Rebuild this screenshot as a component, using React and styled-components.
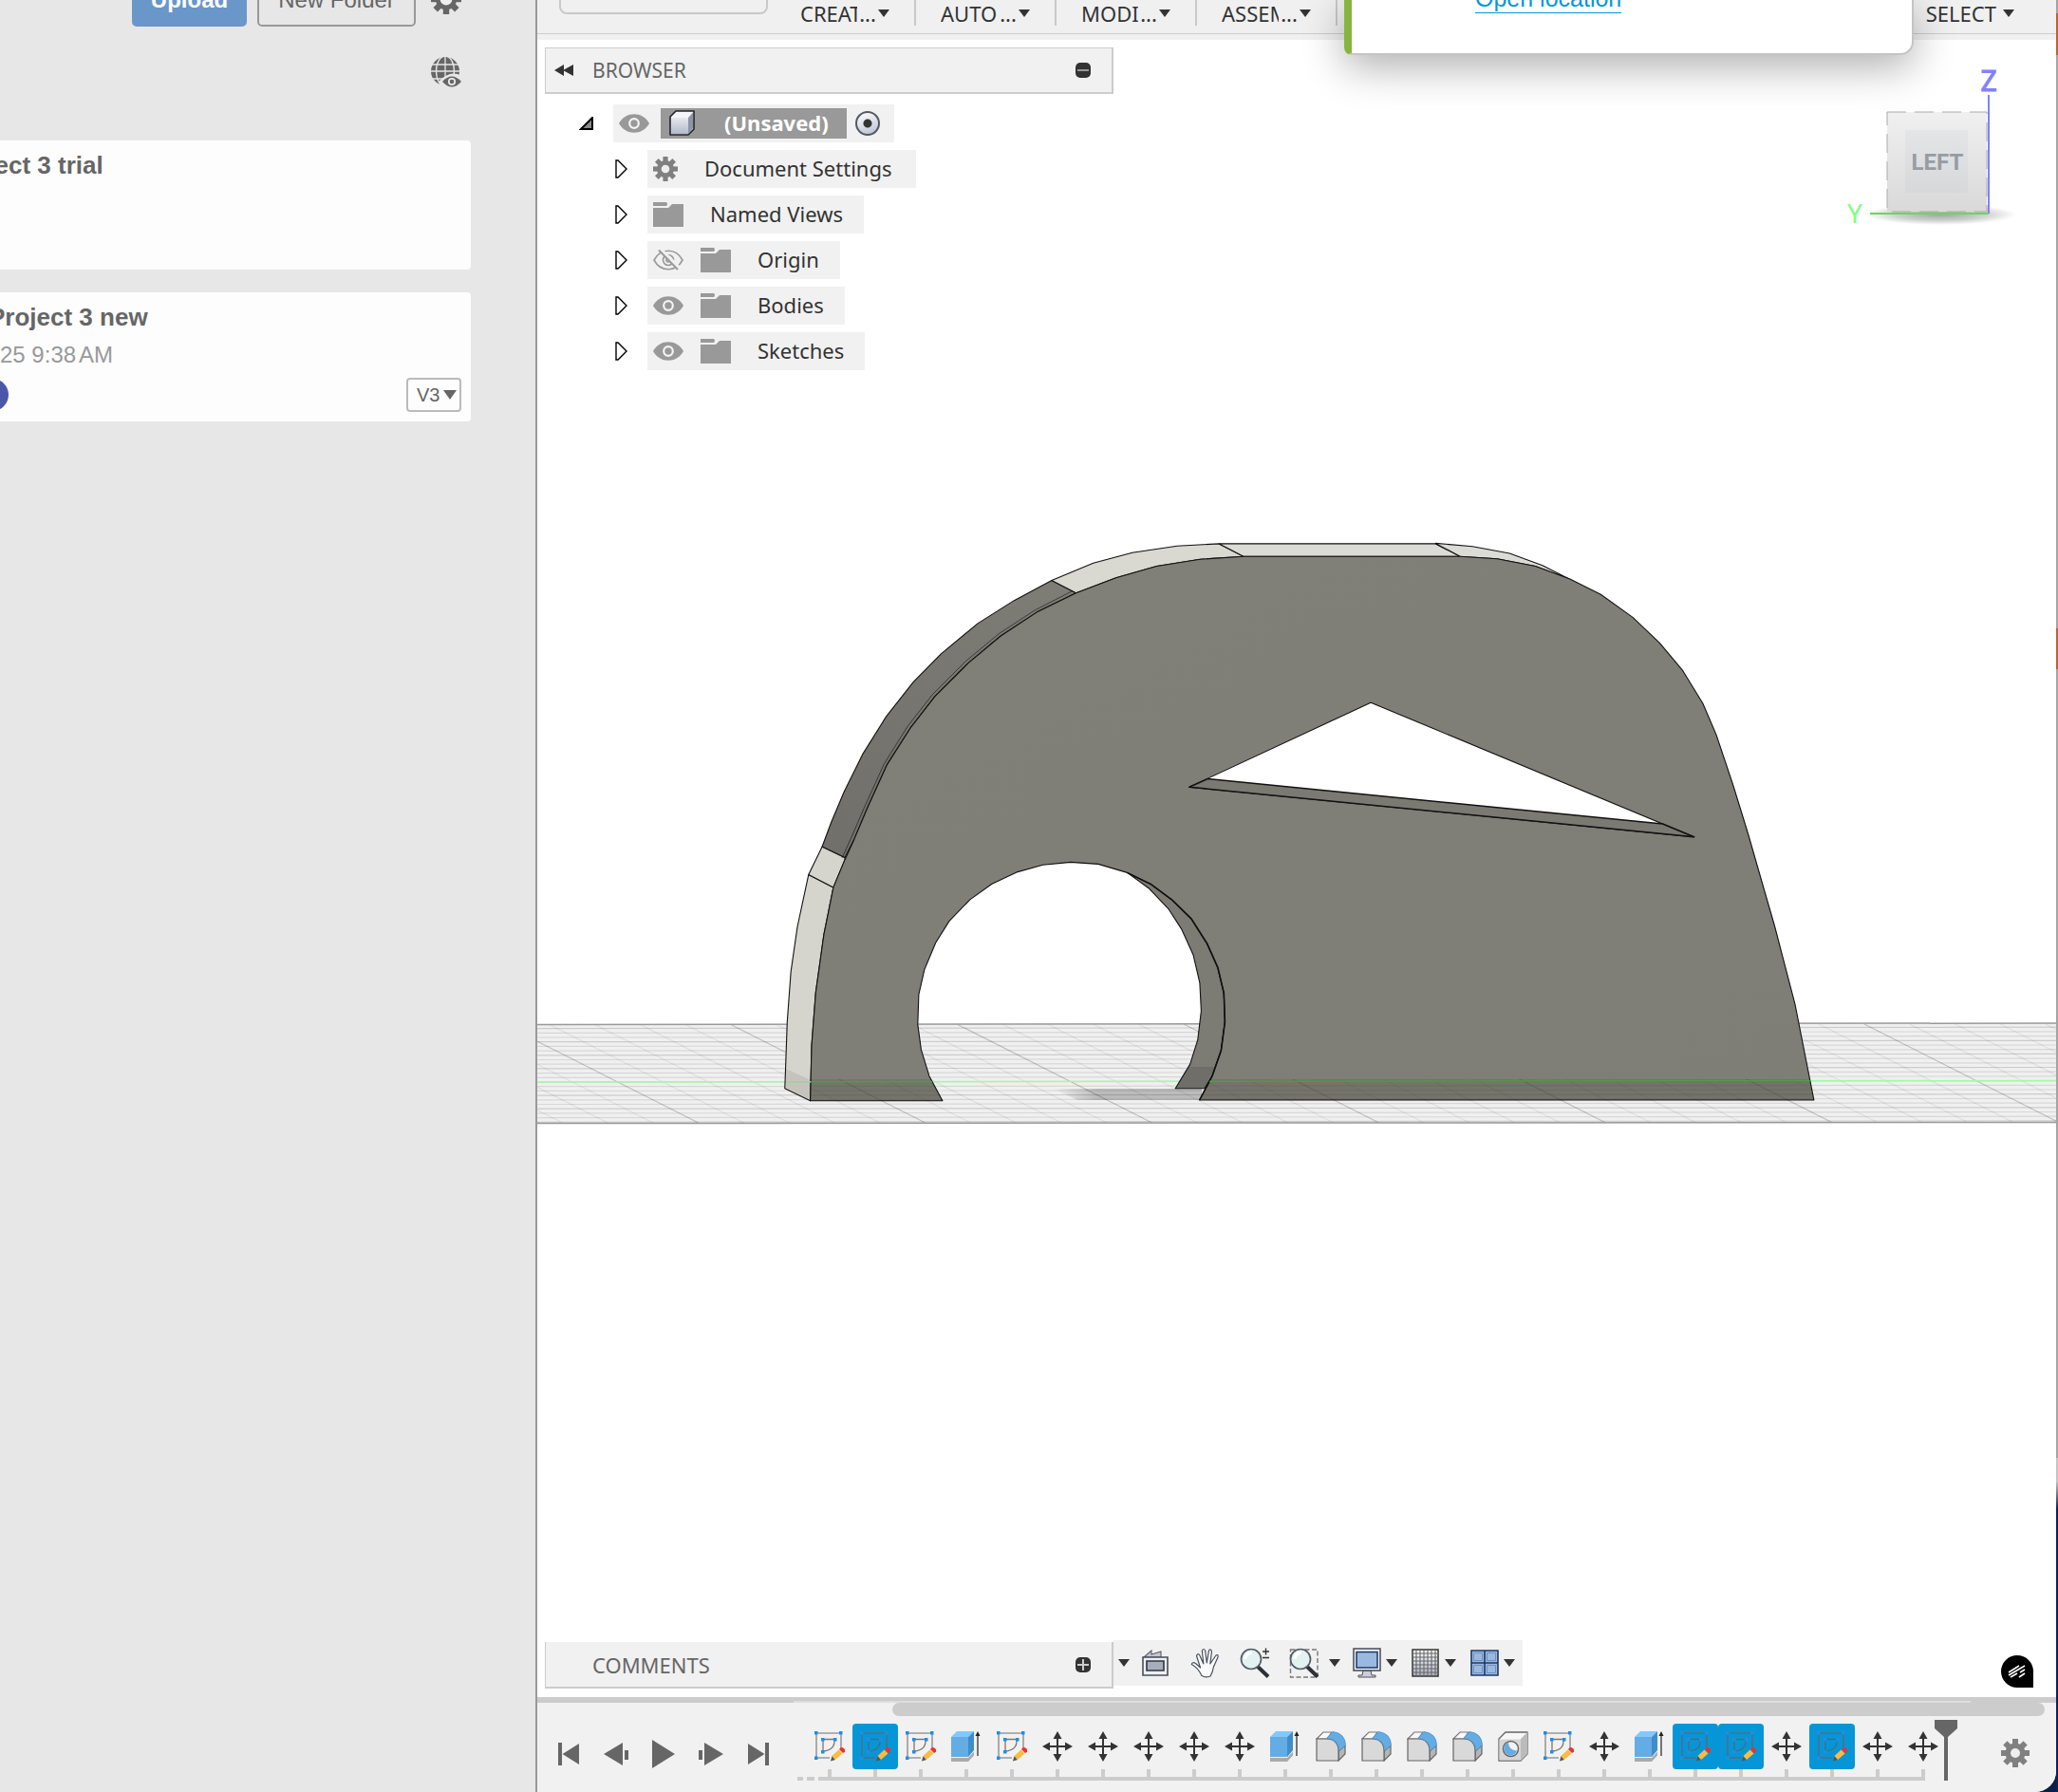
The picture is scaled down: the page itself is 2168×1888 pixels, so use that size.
import React from "react";
import styled, { createGlobalStyle, css } from "styled-components";

const GlobalStyle = createGlobalStyle`
  *, *::before, *::after { box-sizing: border-box; }
  body { margin: 0; background: #0b1f45; }
  button, select, input { font: inherit; color: inherit; margin: 0; }
  button { padding: 0; border: 0; background: none; cursor: pointer; }
  svg { display: block; flex: none; }
`;

const UI_FONT = '"Noto Sans", "Open Sans", sans-serif';
const WEB_FONT = '"Liberation Sans", Arial, sans-serif';

/* ---------- window ---------- */

const Desktop = styled.div`
  display: flex;
  min-height: 100vh;
  overflow: hidden;
`;

const DesktopEdge = styled.div`
  flex: 0 0 2px;
  background: linear-gradient(
    #a3a3a3 0 14px, #b5652f 14px 58px, #a3a3a3 58px 662px, #b5652f 662px 705px,
    #a3a3a3 705px 1536px, #c4c4c4 1536px 1560px, #0e2152 1590px 100%
  );
`;

/* ---------- data panel ---------- */

const DataPanel = styled.aside`
  flex: 0 0 566px;
  padding-right: 68px;
  border-right: 2px solid #999;
  background: #e7e7e7;
  overflow: hidden;
  font-family: ${WEB_FONT};
  font-size: 24px;
  color: #666;
`;

const PanelActions = styled.div`
  display: flex;
  align-items: center;
  justify-content: flex-end;
  height: 58px;
  margin-top: -30px;
  padding-right: 10px;
`;

const PanelButton = styled.button`
  width: ${(p) => (p.$primary ? "121px" : "167px")};
  height: 58px;
  margin-right: ${(p) => (p.$primary ? "11px" : "16px")};
  padding-top: 2px;
  border-radius: 5px;
  line-height: 52px;
  ${(p) =>
    p.$primary
      ? css`background: #6997c9; color: #fff; font-weight: bold;`
      : css`border: 2px solid #999; color: #666;`}
`;

const PanelFilter = styled.div`
  display: flex;
  justify-content: flex-end;
  padding: 32px 10px 0 0;
`;

const FileList = styled.div`
  display: flex;
  flex-direction: column;
  gap: 24px;
  margin-top: 56px;
`;

const FileCard = styled.article`
  display: flex;
  flex-direction: column;
  height: 136px;
  padding-top: 8px;
  border-radius: 0 4px 4px 0;
  background: #fdfdfd;
`;

const FileTitle = styled.h2`
  margin: 0 0 0 ${(p) => -p.$cut}px;
  font-size: 26px;
  line-height: 36px;
  font-weight: bold;
  white-space: nowrap;
`;

const FileDate = styled.time`
  display: flex;
  gap: 3px;
  line-height: 44px;
  color: #999;
`;

const FileFooter = styled.div`
  display: flex;
  align-items: center;
  justify-content: space-between;
  padding: 2px 10px 0 0;
  margin-left: -25px;
`;

const Avatar = styled.span`
  width: 34px;
  height: 34px;
  border-radius: 50%;
  background: #4a57a9;
`;

const VersionBox = styled.label`
  display: flex;
  align-items: center;
  width: 58px;
  height: 36px;
  padding: 0 3px 0 9px;
  border: 2px solid #bbb;
  border-radius: 4px;
  select {
    flex: 1;
    min-width: 0;
    padding: 0;
    border: 0;
    background: none;
    appearance: none;
    font-size: 20px;
    line-height: 24px;
  }
`;

/* ---------- modeling window ---------- */

const Workspace = styled.main`
  position: relative;
  flex: 1;
  min-width: 0;
  display: flex;
  flex-direction: column;
  overflow: hidden;
  border-radius: 0 0 22px 0;
  background: #fff;
  font-family: ${UI_FONT};
  font-size: 22px;
  line-height: 30px;
  color: #333;
`;

const Toolbar = styled.div`
  display: flex;
  align-items: flex-start;
  height: 42px;
  padding: 0 44px 0 23px;
  background: linear-gradient(#f0f0f0 0 35px, #ccc 35px 36px, #f0f0f0 36px);
`;

const WorkspaceButton = styled.button`
  width: 220px;
  height: 45px;
  margin: -30px 8px 0 0;
  border: 2px solid #c9c9c9;
  border-radius: 8px;
`;

const MenuButton = styled.button`
  display: flex;
  align-items: center;
  width: 148px;
  height: 27px;
  padding-left: 26px;
  border-right: 2px solid #c9c9c9;
  line-height: 30px;
`;

const MenuLabel = styled.span`
  width: 60px;
  overflow: hidden;
  white-space: nowrap;
  text-align: left;
`;

const MenuDots = styled.span`
  width: 22px;
`;

const SelectButton = styled.button`
  display: flex;
  align-items: center;
  gap: 7px;
  height: 27px;
  margin-left: auto;
  line-height: 30px;
`;

const Toast = styled.section`
  position: absolute;
  z-index: 3;
  top: 0;
  right: 150px;
  width: 600px;
  height: 58px;
  padding-left: 130px;
  border-style: solid;
  border-width: 0 2px 2px 8px;
  border-color: #c4c4c4 #c4c4c4 #c4c4c4 #86b53f;
  border-radius: 0 0 14px 8px;
  background: #fff;
  box-shadow: 0 12px 44px rgba(0, 0, 0, 0.32);
`;

const ToastLink = styled.a`
  display: block;
  width: max-content;
  margin-top: -16px;
  border-bottom: 1px solid #0696d7;
  font-family: ${WEB_FONT};
  font-size: 25px;
  line-height: 29px;
  color: #0696d7;
  text-decoration: none;
`;

const Viewport = styled.section`
  position: relative;
  flex: 1;
  display: flex;
  flex-direction: column;
  justify-content: space-between;
  min-height: 900px;
  padding: 8px 0 9px 8px;
`;

const SceneSvg = styled.svg`
  position: absolute;
  inset: 0;
  width: 100%;
  height: 100%;
`;

const ViewportRow = styled.div`
  position: relative;
  display: flex;
  align-items: flex-start;
  justify-content: space-between;
  padding-right: ${(p) => p.$right}px;
`;

const CubeSlot = styled.div`
  padding-top: 20px;
`;

const Palette = styled.header`
  display: flex;
  align-items: center;
  width: 599px;
  height: 49px;
  padding: 0 22px 0 9px;
  border-style: solid;
  border-color: #ccc;
  border-width: ${(p) => (p.$open ? "1px 2px 2px 1px" : "0 2px 2px 1px")};
  background: #f1f1f1;
  color: #666;
`;

const PaletteArrow = styled.button`
  width: 40px;
`;

const PaletteTitle = styled.h3`
  flex: 1;
  margin: 0;
  font-size: ${(p) => p.$size};
  font-weight: normal;
  line-height: 30px;
`;

const PaletteToggle = styled.button`
  width: 16px;
  height: 16px;
  border-radius: 5px;
  background: #333;
`;

const Tree = styled.ul`
  display: flex;
  flex-direction: column;
  gap: 8px;
  margin: 11px 0 0;
  padding: 0;
  list-style: none;
`;

const TreeRow = styled.li`
  display: flex;
  height: 40px;
  padding-left: ${(p) => p.$depth * 36}px;
`;

const Expander = styled.button`
  width: 36px;
`;

const TreeItem = styled.div`
  display: flex;
  align-items: center;
  gap: 18px;
  padding: 0 ${(p) => p.$end || 22}px 0 6px;
  background: #f1f1f1;
`;

const TreeLabel = styled.span`
  margin-left: 10px;
  padding-bottom: 2px;
  white-space: nowrap;
`;

const RootItem = styled(TreeItem)`
  gap: 12px;
  padding-right: 15px;
`;

const RootName = styled.div`
  display: flex;
  align-items: center;
  gap: 31px;
  height: 32px;
  padding: 0 19px 0 9px;
  background: #999;
  color: #fff;
  font-weight: bold;
  span { padding-bottom: 2px; }
`;

const ActivateRadio = styled.input`
  appearance: none;
  width: 26px;
  height: 26px;
  border: 2px solid #55585f;
  border-radius: 50%;
  background:
    radial-gradient(circle, #333 0 4px, transparent 5px),
    linear-gradient(160deg, #fff, #b9c0d2);
  && { margin: 0 0 0 -3px; }
`;

const NavGroup = styled.div`
  display: flex;
  flex: 1;
  align-items: flex-start;
`;

const CommentsSlot = styled.div`
  padding-top: 2px;
`;

const NavBar = styled.div`
  display: flex;
  align-items: center;
  height: 48px;
  padding: 0 8px 0 5px;
  background: #f1f1f1;
`;

const NavButton = styled.button`
  display: flex;
  align-items: center;
  gap: ${(p) => p.$gap || 0}px;
  margin-right: ${(p) => p.$after}px;
`;

const Badge = styled.button`
  display: grid;
  place-items: center;
  width: 34px;
  height: 34px;
  margin-top: 16px;
  border-radius: 50% 50% 0 50%;
  background: #000;
`;

/* ---------- timeline ---------- */

const Timeline = styled.footer`
  background: #f1f1f1;
`;

const Splitter = styled.div`
  display: flex;
  align-items: flex-end;
  height: 6px;
  padding: 0 90px 0 270px;
  background: #ccc;
  &::after {
    content: "";
    flex: 1;
    height: 2px;
    background: #ddd;
  }
`;

const ScrollTrack = styled.div`
  padding: 0 12px 0 374px;
`;

const ScrollThumb = styled.div`
  height: 14px;
  border-radius: 7px;
  background: #ccc;
`;

const TimelineRow = styled.div`
  display: flex;
  align-items: flex-start;
  height: 80px;
  padding: 0 28px 0 8px;
`;

const Transport = styled.div`
  display: flex;
  height: 80px;
  margin-right: 16px;
`;

const TransportButton = styled.button`
  display: grid;
  place-items: center;
  width: 50px;
  height: 80px;
`;

const History = styled.div`
  padding-top: 8px;
`;

const FeatureList = styled.div`
  display: flex;
  padding-left: 10px;
`;

const Feature = styled.button`
  display: flex;
  flex-direction: column;
  align-items: center;
  width: 48px;
`;

const FeatureTile = styled.span`
  display: grid;
  place-items: center;
  width: 48px;
  height: 48px;
  border-radius: 4px;
  background: ${(p) => (p.$selected ? "#0696d7" : "transparent")};
`;

const Tick = styled.span`
  width: 4px;
  height: 8px;
  background: #ccc;
`;

const Rail = styled.div`
  display: flex;
  gap: 4px;
  height: 4px;
  padding-right: 22px;
`;

const RailPart = styled.span`
  flex: ${(p) => (p.$width ? `0 0 ${p.$width}px` : "1")};
  background: #ccc;
`;

const MarkerButton = styled.button`
  margin: 4px 0 0 -12px;
`;

const TimelineSettings = styled.button`
  margin: 24px 0 0 auto;
`;

/* ---------- icons ---------- */

function Gear({ size, color, hole = 5 }) {
  return (
    <svg width={size} height={size} viewBox="-15 -15 30 30">
      <g fill={color}>
        {[0, 45, 90, 135].map((a) => (
          <rect key={a} x="-3" y="-15" width="6" height="30" transform={`rotate(${a})`} />
        ))}
        <circle r="10.5" />
      </g>
      <circle r={hole} fill="#eee" />
    </svg>
  );
}

const Caret = ({ w = 14, h = 9, color = "#333" }) => (
  <svg width={w} height={h} viewBox="0 0 14 9" preserveAspectRatio="none">
    <path d="M0 0H14L7 9Z" fill={color} />
  </svg>
);

const GlobeEye = () => (
  <svg width="32" height="32" viewBox="0 0 32 32">
    <ellipse cx="15" cy="15" rx="15" ry="15" fill="#666" />
    <g fill="none" stroke="#e7e7e7" strokeWidth="1.3">
      <path d="M0 8H30M0 15H30M0 23H30M15 0V30" />
      <ellipse cx="15" cy="15" rx="9.5" ry="16" />
    </g>
    <path d="M8 26Q21 12 34 21V34H12Z" fill="#e7e7e7" />
    <path d="M12 26Q22 15 32 26Q22 37 12 26Z" fill="#666" />
    <circle cx="22" cy="26" r="3.2" fill="#666" stroke="#e7e7e7" strokeWidth="1.8" />
  </svg>
);

const Eye = () => (
  <svg width="32" height="20" viewBox="0 0 32 20">
    <path d="M0 10C7-3 25-3 32 10C25 23 7 23 0 10Z" fill="#999" />
    <circle cx="16" cy="10" r="4.8" fill="#999" stroke="#f4f4f4" strokeWidth="2.2" />
  </svg>
);

const EyeOff = () => (
  <svg width="32" height="22" viewBox="0 0 32 22" fill="none" stroke="#999" strokeWidth="1.6">
    <path d="M1 11C8-2 24-2 31 11C24 24 8 24 1 11Z" />
    <circle cx="16" cy="11" r="5.5" />
    <circle cx="16" cy="11" r="2" />
    <path d="M8 0L28 20" stroke="#f1f1f1" strokeWidth="4" />
    <path d="M6 0.500L26 21" strokeWidth="2" />
  </svg>
);

const Folder = () => (
  <svg width="32" height="26" viewBox="0 0 32 26" fill="#999">
    <path d="M0 0H14Q16 2 14 4H0Z" />
    <path d="M0 6H16L20 2H32V26H0Z" />
  </svg>
);

const BodyCube = () => (
  <svg width="27" height="28" viewBox="0 0 27 28">
    <defs>
      <linearGradient id="cubeFace" x1="0" y1="0" x2="0" y2="1">
        <stop offset="0" stopColor="#e6e8ee" />
        <stop offset="1" stopColor="#b3b9cc" />
      </linearGradient>
    </defs>
    <path d="M1 7L7 1H26V20L20 26H1Z" fill="#f4f5f8" stroke="#222" strokeWidth="1.6" strokeLinejoin="round" />
    <path d="M2 8H20V25H2Z" fill="url(#cubeFace)" />
    <path d="M20 8L25 2.500V19L20 25Z" fill="#8e94a8" />
  </svg>
);

const RootArrow = () => (
  <svg width="16" height="14" viewBox="0 0 16 14">
    <path d="M2 13L14 1V13Z" fill="#888" stroke="#000" strokeWidth="2" />
  </svg>
);

const ChildArrow = () => (
  <svg width="16" height="20" viewBox="0 0 16 20">
    <path d="M3 1H5L14 10L5 19H3Z" fill="#fff" stroke="#000" strokeWidth="1.4" />
  </svg>
);

const SketchIcon = ({ dim }) => (
  <svg width="32" height="32" viewBox="0 0 32 32">
    <path d="M2 2H28V18M2 2V28H16" fill="none" stroke={dim ? "#4a7288" : "#999"} strokeWidth="1.600" />
    <path d="M9 8.500H21Q22 20 9 21Z" fill="none" stroke={dim ? "#4a6c80" : "#777"} strokeWidth="1.300" />
    <g fill="#1e8ee6">
      <path d="M0 0H3.500V3.500H0ZM26 0H29.500V3.500H26ZM0 26.500H3.500V30H0ZM7 7H10.500V10.500H7ZM20 7H23.500V10.500H20ZM7 20H10.500V23.500H7Z" />
    </g>
    <path d="M17 31.500L18.500 26L22 30Z" fill="#555" />
    <path d="M18.500 26L25.500 19.500L29.500 23.500L22 30Z" fill="#f9bb42" />
    <path d="M26 19Q28 15.500 31 18T30 23Z" fill="#ee3030" />
  </svg>
);

const MoveIcon = () => (
  <svg width="32" height="32" viewBox="0 0 32 32" fill="#333">
    <path d="M15 5H17V27H15ZM5 15H27V17H5Z" />
    <path d="M16 0L20.500 8H11.500ZM16 32L20.500 24H11.500ZM0 16L8 11.500V20.500ZM32 16L24 11.500V20.500Z" />
  </svg>
);

const ExtrudeIcon = () => (
  <svg width="32" height="32" viewBox="0 0 32 32">
    <path d="M0 28H18L24 21.500V25.500L18 32H0Z" fill="#aaa" />
    <path d="M0 6H18V27H0Z" fill="#64ace4" />
    <path d="M0 6L6 0H24L18 6Z" fill="#83c8fb" />
    <path d="M18 6L24 0V20L18 27Z" fill="#3d8ecb" />
    <path d="M27.400 3H28.600V26H27.400Z" fill="#222" />
    <path d="M28 0L30.500 5H25.500Z" fill="#222" />
  </svg>
);

const FilletIcon = () => (
  <svg width="32" height="32" viewBox="0 0 32 32">
    <path d="M1 8L8 1H17L12 8Z" fill="#fafafa" stroke="#777" strokeWidth="1.200" />
    <path d="M24 31V21L31 15V24Z" fill="#b5b5b5" stroke="#666" strokeWidth="1.200" />
    <path d="M1 31V8H11Q24 8 24 21V31Z" fill="#d9d9d9" stroke="#666" strokeWidth="1.200" />
    <path d="M12 7L18 0.500Q31 2 31.500 14.500L25 20.500Q24 8.500 12 7Z" fill="#64ace4" stroke="#4c94cc" strokeWidth="0.800" />
  </svg>
);

const HoleIcon = () => (
  <svg width="32" height="32" viewBox="0 0 32 32">
    <path d="M1 8L8 1H31V24L24 31H1Z" fill="#f7f7f7" stroke="#666" strokeWidth="1.300" />
    <path d="M24 8L31 1V24L24 31Z" fill="#bbb" />
    <path d="M1.500 8.500H24V30.500H1.500Z" fill="#d6d6d6" />
    <circle cx="13.500" cy="18.500" r="8" fill="#f2f2f2" stroke="#666" strokeWidth="1.500" />
    <path d="M11 11.800A7 7 0 1 0 20 20.500Q11 20 11 11.800Z" fill="#64ace4" />
  </svg>
);

const FEATURE_ICONS = {
  sketch: SketchIcon,
  move: MoveIcon,
  extrude: ExtrudeIcon,
  fillet: FilletIcon,
  hole: HoleIcon,
};

const LookAtIcon = () => (
  <svg width="28" height="30" viewBox="0 0 28 30">
    <path d="M2 9L10 2V6L20 3V9Z" fill="#c3c7d0" stroke="#5b606b" strokeWidth="1.100" />
    <path d="M1 9H27V28H1Z" fill="#eef0f5" stroke="#4a4e58" strokeWidth="1.600" />
    <path d="M5 13H23V23H5Z" fill="#a7adbd" stroke="#33363f" strokeWidth="1.600" />
  </svg>
);

const HandIcon = () => (
  <svg width="32" height="32" viewBox="0 0 32 32">
    <path
      d="M12 29.500Q8 21 1.300 17.500Q2 14.500 5.500 16.500L10.500 21L6.500 8.500Q8 5 9.800 8L13.800 17L12.300 3Q14 0 15.600 3L17.300 16L19.500 3Q21.500 0.500 22.500 4L20.800 17L27 8Q29.500 6.500 29 10L24.500 20Q23.500 26 21 30Q16 32 12 29.500Z"
      fill="#fbfbfd"
      stroke="#4a505c"
      strokeWidth="1.200"
      strokeLinejoin="round"
    />
  </svg>
);

const ZoomIcon = ({ windowed }) => (
  <svg width="32" height="32" viewBox="0 0 32 32">
    {windowed ? (
      <path d="M1.500 2H30V31H1.500Z" fill="none" stroke="#777" strokeWidth="1.400" strokeDasharray="5 2.500" />
    ) : (
      <path d="M24 4H31M27.500 0.500V7.500M24 10.500H31" stroke="#333" strokeWidth="1.400" />
    )}
    <path d="M19 20L30 30.500" stroke="#2d3038" strokeWidth="4" />
    <circle cx="12" cy="12" r="10.500" fill="#e3f1f1" stroke="#555b66" strokeWidth="1.700" />
    <path d="M6 12Q6 6 13 5" fill="none" stroke="#fff" strokeWidth="3" />
  </svg>
);

const MonitorIcon = () => (
  <svg width="30" height="32" viewBox="0 0 30 32">
    <path d="M11 24H19L20 29H24V31H6V29H10Z" fill="#ccd" stroke="#555" />
    <path d="M1 1H29V24H1Z" fill="#f4f5f8" stroke="#444a58" strokeWidth="1.500" />
    <path d="M4 4.500H26V21H4Z" fill="#9bb9e0" stroke="#1d3766" strokeWidth="1.500" />
  </svg>
);

const GridIcon = () => (
  <svg width="29" height="30" viewBox="0 0 29 30">
    <defs>
      <linearGradient id="gridFade" x1="0" y1="0" x2="0" y2="1">
        <stop offset="0" stopColor="#fff" />
        <stop offset="1" stopColor="#a9afc0" />
      </linearGradient>
    </defs>
    <path d="M1 1H28V29H1Z" fill="url(#gridFade)" stroke="#333" strokeWidth="1.500" />
    <path
      d="M5 1V29M9 1V29M13 1V29M17 1V29M21 1V29M25 1V29M1 5H28M1 9H28M1 13H28M1 17H28M1 21H28M1 25H28"
      stroke="#666"
      strokeWidth="1.100"
    />
  </svg>
);

const PanesIcon = () => (
  <svg width="30" height="28" viewBox="0 0 30 28">
    <path d="M1 1H29V27H1Z" fill="#9bb9e0" stroke="#1d3766" strokeWidth="1.600" />
    <path d="M15 1V27M1 14H29" stroke="#1d3766" strokeWidth="1.600" />
    <path d="M3.500 3.500H12.500V11.500H3.500ZM17.500 3.500H26.500V11.500H17.500ZM3.500 16.500H12.500V24.500H3.500ZM17.500 16.500H26.500V24.500H17.500Z" fill="none" stroke="#6d8fc0" />
  </svg>
);

const ViewCube = () => (
  <svg width="190" height="170" viewBox="1940 70 190 170" role="img" aria-label="View cube">
    <defs>
      <linearGradient id="cubeSide" x1="0" y1="0" x2="0" y2="1">
        <stop offset="0" stopColor="#f0f0f0" />
        <stop offset="1" stopColor="#d9d9d9" />
      </linearGradient>
      <linearGradient id="cubeCenter" x1="0" y1="0" x2="0" y2="1">
        <stop offset="0" stopColor="#e4e5e7" />
        <stop offset="1" stopColor="#d6d8da" />
      </linearGradient>
      <radialGradient id="cubeShadow">
        <stop offset="0" stopColor="#000" stopOpacity="0.36" />
        <stop offset="0.6" stopColor="#000" stopOpacity="0.18" />
        <stop offset="1" stopColor="#000" stopOpacity="0" />
      </radialGradient>
    </defs>
    <ellipse cx="2044" cy="226" rx="80" ry="11" fill="url(#cubeShadow)" />
    <rect x="1988" y="118" width="105" height="105" fill="url(#cubeSide)" stroke="#aaa" strokeDasharray="20 9" />
    <rect x="2007" y="137" width="66" height="66" fill="url(#cubeCenter)" />
    <path d="M1970 225H2095" stroke="#5fdc5f" strokeWidth="2" />
    <path d="M2095 100V225" stroke="#8080ff" strokeWidth="2" />
    <g textAnchor="middle">
      <text x="2041" y="179" fontFamily="Roboto, sans-serif" fontWeight="bold" fontSize="24" fill="#989ca2">LEFT</text>
      <text x="2095" y="96" fontFamily={UI_FONT} fontSize="30" fill="#8080ff" stroke="#8080ff">Z</text>
      <text x="1954" y="235" fontFamily={UI_FONT} fontSize="28" fill="#7fff7f">Y</text>
    </g>
  </svg>
);

/* ---------- 3D scene ---------- */

const ARC_POINTS =
  "1263.6,1159 1277,1133.7 1286.4,1106.7 1290.4,1076.5 1289.3,1046.3 1282.9,1019.4 1271.4,993.7 1255,968 1235,948.4 1212.5,931.6 1187.5,919.4";

const FRONT =
  "M853.6 1159.8L855 1101.8 859.3 1045.9 867.9 984.7 877.9 934.9 890 905.9 900 883.9 914.3 850 934.3 805.9 959.3 766.7 985 733.7 1020 698.6 1054.3 670 1092.1 645.1 1133.6 624.7 1175.7 608.8 1218.6 596.5 1264.3 589.2 1310 586.3 1538.2 586.3 1577.2 588.8 1617.4 596.5 1653.8 610 1686.3 626.3 1720 650.4 1748.3 677.3 1772.8 706.7 1793.8 741 1808 774.1 1826 828 1842 880 1856.6 931 1869.6 976 1891 1058.2 1910.900 1159 " +
  "L1263.6 1159 1277 1133.7 1286.4 1106.7 1290.4 1076.5 1289.3 1046.3 1282.9 1019.4 1271.4 993.7 1255 968 1235 948.4 1212.5 931.6 1187.5 919.4 1157 910.4 1127.9 908.4 1098.6 911.2 1072.1 918.6 1045 931.2 1022.1 947.6 1000 970.4 985.7 993.3 973.9 1021.4 967.9 1047.6 966.8 1079.4 970.4 1105.9 978.9 1133.7 992.9 1159.800Z" +
  "M1444.1 740.2L1784.7 881.8 1252.9 829.2Z";

const FLOOR_ROWS = Array.from({ length: 22 }, (_, i) => 1083 + i * 4.7);
const FLOOR_DIAGONALS = Array.from({ length: 42 }, (_, i) => i - 8);

function FloorLines() {
  return (
    <g fill="none">
      {FLOOR_ROWS.map((y, i) => (
        <path key={y} d={`M566 ${y + 0.6}L2166 ${y - 0.8}`} stroke="#000" strokeOpacity={i % 3 ? 0.1 : 0.15} strokeWidth="1.2" />
      ))}
      {FLOOR_DIAGONALS.map((n) => (
        <path
          key={n}
          d={`M${769 + n * 47.8} 1079L${974.8 + n * 47.8} 1183`}
          stroke="#000"
          strokeOpacity={n % 5 === 0 ? 0.2 : 0.07}
          strokeWidth="1.2"
        />
      ))}
    </g>
  );
}

function Scene() {
  return (
    <SceneSvg viewBox="566 42 1600 1746" preserveAspectRatio="xMidYMid slice" role="img" aria-label="Model">
      <defs>
        <linearGradient id="front" x1="0" y1="0" x2="1" y2="1">
          <stop offset="0" stopColor="#818078" />
          <stop offset="1" stopColor="#7e7d76" />
        </linearGradient>
        <linearGradient id="rim" x1="1" y1="0" x2="0" y2="1">
          <stop offset="0" stopColor="#7e7d76" />
          <stop offset="1" stopColor="#706f6a" />
        </linearGradient>
        <linearGradient id="shadow">
          <stop offset="0" stopColor="#000" stopOpacity="0" />
          <stop offset="0.3" stopColor="#000" stopOpacity="0.22" />
        </linearGradient>
        <clipPath id="floorClip"><path d="M566 1079L2166 1078V1183L566 1184Z" /></clipPath>
        <clipPath id="frontClip"><path d={FRONT} clipRule="evenodd" /></clipPath>
        <clipPath id="submerged"><rect x="820" y="1137" width="1100" height="23" /></clipPath>
      </defs>

      <path d="M566 1079L2166 1078V1183L566 1184Z" fill="#f0f0f0" />
      <g clipPath="url(#floorClip)"><FloorLines /></g>
      <path d="M566 1079.500L2166 1078M566 1183.500L2166 1182.500" stroke="#999" strokeWidth="1.500" />
      <path d="M566 1140L2166 1138.500" stroke="#9dff9d" strokeWidth="1.500" />
      <path d="M1109 1147H1266V1159H1135Z" fill="url(#shadow)" />

      <g stroke="#111" strokeWidth="1.100" strokeLinejoin="round">
        <path d="M826.8 1146.7L829.3 1076.5 833.2 1023.5 840 976.5 851.8 921.4 877.900 934.900 867.9 984.7 859.3 1045.9 855 1101.8 853.6 1159.8Z" fill="#d5d5cd" />
        <path d="M851.8 921.4L866.1 892 890 903.500 890 905.9 877.9 934.9Z" fill="#d5d5cd" />
        <path
          d="M866.1 892L875.7 866.3 889.3 834 908.6 794.9 933.6 754.9 962.1 718.6 991.4 688.8 1030 656.9 1067.9 632.9 1107.9 611.6 1133.6 624.7 1092.1 645.1 1054.3 670 1020 698.6 985 733.7 959.3 766.7 934.3 805.9 914.3 850 900 883.9 890 903.500Z"
          fill="url(#rim)"
        />
        <path d="M1107.9 611.6L1151.8 593.3 1192.9 582.2 1240 575.3 1284.3 572.9 1310 586.3 1264.3 589.2 1218.6 596.5 1175.7 608.8 1133.6 624.7Z" fill="#d9d9d2" />
        <path d="M1284.3 572.9H1512.2L1538.2 586.3H1310Z" fill="#dcdcd6" />
        <path d="M1512.2 572.4L1551.2 575.7 1590.3 583 1625 595.7 1653 610 1617.4 596.5 1577.2 588.8 1538.2 586.3Z" fill="#dcdcd6" />
        <path
          d="M1187.5 919.4L1210 935.7 1230.7 957.3 1245 979.4 1257.1 1006.3 1263.9 1035.7 1265.4 1065.1 1261.8 1095.3 1253.6 1121.4 1238.2 1146.7 1269 1146.700L1277 1133.7 1286.4 1106.7 1290.4 1076.5 1289.3 1046.3 1282.9 1019.4 1271.4 993.7 1255 968 1235 948.4 1212.5 931.6Z"
          fill="#7c7b74"
        />
        <path d="M1240 1143L1252 1124H1281L1269 1146H1240Z" fill="#000" fillOpacity="0.100" stroke="none" />
        <path d={FRONT} fill="url(#front)" fillRule="evenodd" />
        <path d="M1272.1 820.6L1751.4 868 1784.7 881.8 1252.9 829.2Z" fill="#7a7972" strokeWidth="1.500" />
        <polyline points={ARC_POINTS} fill="none" strokeWidth="1.600" />
        <path d="M887 904L897 882 911.500 848.500 931.500 804.500 956.500 764.700 982.500 731.500 1017.500 696.500 1052.500 667.500 1090 643 1130 622.500" fill="none" strokeWidth="0.600" />
      </g>

      <path d="M828 1126L854 1138V1159L828 1146Z" fill="#000" fillOpacity="0.080" />
      <g clipPath="url(#frontClip)">
        <g clipPath="url(#submerged)">
          <rect x="820" y="1137" width="1100" height="23" fill="#000" fillOpacity="0.080" />
          <g opacity="0.600"><FloorLines /></g>
        </g>
        <path d="M566 1140L2166 1138.500" stroke="#4ba043" strokeWidth="1.500" />
      </g>
      <path d="M828 1139.800H854" stroke="#a5cf9d" strokeWidth="1.500" />
    </SceneSvg>
  );
}

/* ---------- content ---------- */

const MENUS = ["CREAT", "AUTO", "MODI", "ASSEM"];

const TREE = [
  { label: "Document Settings", icons: ["gear"], end: 26 },
  { label: "Named Views", icons: ["folder"] },
  { label: "Origin", icons: ["hidden", "folder"] },
  { label: "Bodies", icons: ["visible", "folder"] },
  { label: "Sketches", icons: ["visible", "folder"] },
];

const TREE_ICONS = {
  gear: <Gear size={26} color="#808080" />,
  folder: <Folder />,
  hidden: <EyeOff />,
  visible: <Eye />,
};

const f = (kind, selected = false) => ({ kind, selected });
const HISTORY = [
  f("sketch"), f("sketch", true), f("sketch"), f("extrude"), f("sketch"),
  f("move"), f("move"), f("move"), f("move"), f("move"),
  f("extrude"), f("fillet"), f("fillet"), f("fillet"), f("fillet"),
  f("hole"), f("sketch"), f("move"), f("extrude"), f("sketch", true),
  f("sketch", true), f("move"), f("sketch", true), f("move"), f("move"),
];

const TRANSPORT = [
  { label: "Go to beginning", w: 22, h: 24, d: "M0 0H4V24H0ZM22 1V23L4.500 12Z" },
  { label: "Step back", w: 26, h: 24, d: "M20 0V24L0 12ZM22 8H26V18H22Z" },
  { label: "Play", w: 24, h: 30, d: "M0 0L24 15L0 30Z" },
  { label: "Step forward", w: 26, h: 24, d: "M0 8H4V18H0ZM6 0L26 12L6 24Z" },
  { label: "Go to end", w: 22, h: 24, d: "M0 1L17.500 12L0 23ZM18 0H22V24H18Z" },
];

const NAV = [
  { label: "Look at", icon: <LookAtIcon />, after: 23 },
  { label: "Pan", icon: <HandIcon />, after: 20 },
  { label: "Zoom", icon: <ZoomIcon />, after: 20 },
  { label: "Zoom window", icon: <ZoomIcon windowed />, menu: true, gap: 10, after: 13 },
  { label: "Display settings", icon: <MonitorIcon />, menu: true, gap: 5, after: 15 },
  { label: "Grid and snaps", icon: <GridIcon />, menu: true, gap: 6, after: 15 },
  { label: "Viewports", icon: <PanesIcon />, menu: true, gap: 5, after: 0 },
];

export default function App() {
  return (
    <>
      <GlobalStyle />
      <Desktop>
        <DataPanel>
          <PanelActions>
            <PanelButton $primary>Upload</PanelButton>
            <PanelButton>New Folder</PanelButton>
            <button aria-label="Panel settings"><Gear size={32} color="#666" hole={6} /></button>
          </PanelActions>
          <PanelFilter>
            <button aria-label="Shared view"><GlobeEye /></button>
          </PanelFilter>
          <FileList>
            <FileCard>
              <FileTitle $cut={56}>Project 3 trial</FileTitle>
            </FileCard>
            <FileCard>
              <FileTitle $cut={12}>Project 3 new</FileTitle>
              <FileDate><span>25 9:38</span><span>AM</span></FileDate>
              <FileFooter>
                <Avatar />
                <VersionBox>
                  <select aria-label="Version" defaultValue="V3"><option>V3</option></select>
                  <Caret w={14} h={10} color="#666" />
                </VersionBox>
              </FileFooter>
            </FileCard>
          </FileList>
        </DataPanel>

        <Workspace>
          <Toolbar>
            <WorkspaceButton aria-label="Change workspace" />
            {MENUS.map((name) => (
              <MenuButton key={name}>
                <MenuLabel>{name}</MenuLabel>
                <MenuDots>...</MenuDots>
                <Caret w={12} h={8} />
              </MenuButton>
            ))}
            <SelectButton>
              SELECT
              <Caret w={12} h={8} />
            </SelectButton>
          </Toolbar>

          <Toast>
            <ToastLink href="#location">Open location</ToastLink>
          </Toast>

          <Viewport>
            <Scene />
            <ViewportRow $right={36}>
              <div>
                <Palette $open>
                  <PaletteArrow aria-label="Collapse browser">
                    <svg width="20" height="12" viewBox="0 0 20 12"><path d="M10 0V12L0 6ZM20 0V12L9 6Z" fill="#333" /></svg>
                  </PaletteArrow>
                  <PaletteTitle $size="21px">BROWSER</PaletteTitle>
                  <PaletteToggle aria-label="Minimize browser">
                    <svg width="16" height="16"><path d="M2 8H14" stroke="#999" strokeWidth="2" /></svg>
                  </PaletteToggle>
                </Palette>
                <Tree>
                  <TreeRow $depth={1}>
                    <Expander aria-label="Collapse document"><RootArrow /></Expander>
                    <RootItem>
                      <Eye />
                      <RootName><BodyCube /><span>(Unsaved)</span></RootName>
                      <ActivateRadio type="radio" name="active" aria-label="Activate component" defaultChecked />
                    </RootItem>
                  </TreeRow>
                  {TREE.map((node) => (
                    <TreeRow key={node.label} $depth={2}>
                      <Expander aria-label={`Expand ${node.label}`}><ChildArrow /></Expander>
                      <TreeItem $end={node.end}>
                        {node.icons.map((name) => (
                          <React.Fragment key={name}>{TREE_ICONS[name]}</React.Fragment>
                        ))}
                        <TreeLabel>{node.label}</TreeLabel>
                      </TreeItem>
                    </TreeRow>
                  ))}
                </Tree>
              </div>
              <CubeSlot><ViewCube /></CubeSlot>
            </ViewportRow>

            <ViewportRow $right={24}>
              <NavGroup>
                <CommentsSlot>
                  <Palette>
                    <PaletteArrow as="span" />
                    <PaletteTitle $size="22px">COMMENTS</PaletteTitle>
                    <PaletteToggle aria-label="Expand comments">
                      <svg width="16" height="16"><path d="M2 8H14M8 2V14" stroke="#ccc" strokeWidth="2" /></svg>
                    </PaletteToggle>
                  </Palette>
                </CommentsSlot>
                <NavBar>
                  <NavButton aria-label="Orbit" $after={13}><Caret w={12} h={8} /></NavButton>
                  {NAV.map((n) => (
                    <NavButton key={n.label} aria-label={n.label} $gap={n.gap} $after={n.after}>
                      {n.icon}
                      {n.menu && <Caret w={12} h={8} />}
                    </NavButton>
                  ))}
                </NavBar>
              </NavGroup>
              <Badge aria-label="Assistant">
                <svg width="20" height="14" viewBox="0 0 20 14" stroke="#fff" strokeWidth="1.600">
                  <path d="M1 8L12 1M1 11L18 1M3 13L10 9M13 8L18 5M12 13L18 9" />
                </svg>
              </Badge>
            </ViewportRow>
          </Viewport>

          <Timeline>
            <Splitter />
            <ScrollTrack><ScrollThumb /></ScrollTrack>
            <TimelineRow>
              <Transport>
                {TRANSPORT.map((t) => (
                  <TransportButton key={t.label} aria-label={t.label}>
                    <svg width={t.w} height={t.h}><path d={t.d} fill="#666" /></svg>
                  </TransportButton>
                ))}
              </Transport>
              <History>
                <FeatureList>
                  {HISTORY.map((item, i) => {
                    const Icon = FEATURE_ICONS[item.kind];
                    return (
                      <Feature key={i} aria-label={`${item.kind} ${i + 1}`}>
                        <FeatureTile $selected={item.selected}><Icon dim={item.selected} /></FeatureTile>
                        <Tick />
                      </Feature>
                    );
                  })}
                </FeatureList>
                <Rail>
                  <RailPart $width={6} />
                  <RailPart $width={8} />
                  <RailPart />
                </Rail>
              </History>
              <MarkerButton aria-label="History marker">
                <svg width="24" height="64"><path d="M0 0H24V9L14 18V64H10V18L0 9Z" fill="#666" /></svg>
              </MarkerButton>
              <TimelineSettings aria-label="Timeline settings"><Gear size={30} color="#808080" /></TimelineSettings>
            </TimelineRow>
          </Timeline>
        </Workspace>
        <DesktopEdge />
      </Desktop>
    </>
  );
}
